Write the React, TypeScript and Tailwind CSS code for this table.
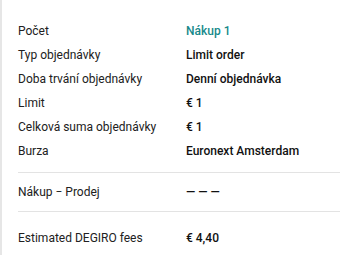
import React from "react";

const rows: [string, string, boolean?][] = [
  ["Počet", "Nákup 1", true],
  ["Typ objednávky", "Limit order"],
  ["Doba trvání objednávky", "Denní objednávka"],
  ["Limit", "€ 1"],
  ["Celková suma objednávky", "€ 1"],
  ["Burza", "Euronext Amsterdam"],
];

function Row({ label, value, teal }: { label: string; value: string; teal?: boolean }) {
  return (
    <div className="flex h-[24px] items-center">
      <div className="w-[168px] shrink-0 text-[#212121]">{label}</div>
      <div className={teal ? "font-medium text-[#17898a]" : "font-medium text-[#111111]"}>{value}</div>
    </div>
  );
}

export default function App() {
  return (
    <div
      className="h-[255px] w-[340px] overflow-hidden bg-white"
      style={{ fontFamily: "Roboto, 'Liberation Sans', sans-serif" }}
    >
      <div className="h-full border-l-2 border-[#e6e6e6] pl-4 text-[12px] leading-[24px]">
        <div className="pt-[19px] pb-[9px]">
          {rows.map(([l, v, t]) => (
            <Row key={l} label={l} value={v} teal={t} />
          ))}
        </div>
        <div className="border-t border-[#e3e3e3] pt-[7px] pb-[7px]">
          <Row label="Nákup − Prodej" value="— — —" />
        </div>
        <div className="border-t border-[#e3e3e3] pt-[14px]">
          <Row label="Estimated DEGIRO fees" value="€ 4,40" />
        </div>
      </div>
    </div>
  );
}
